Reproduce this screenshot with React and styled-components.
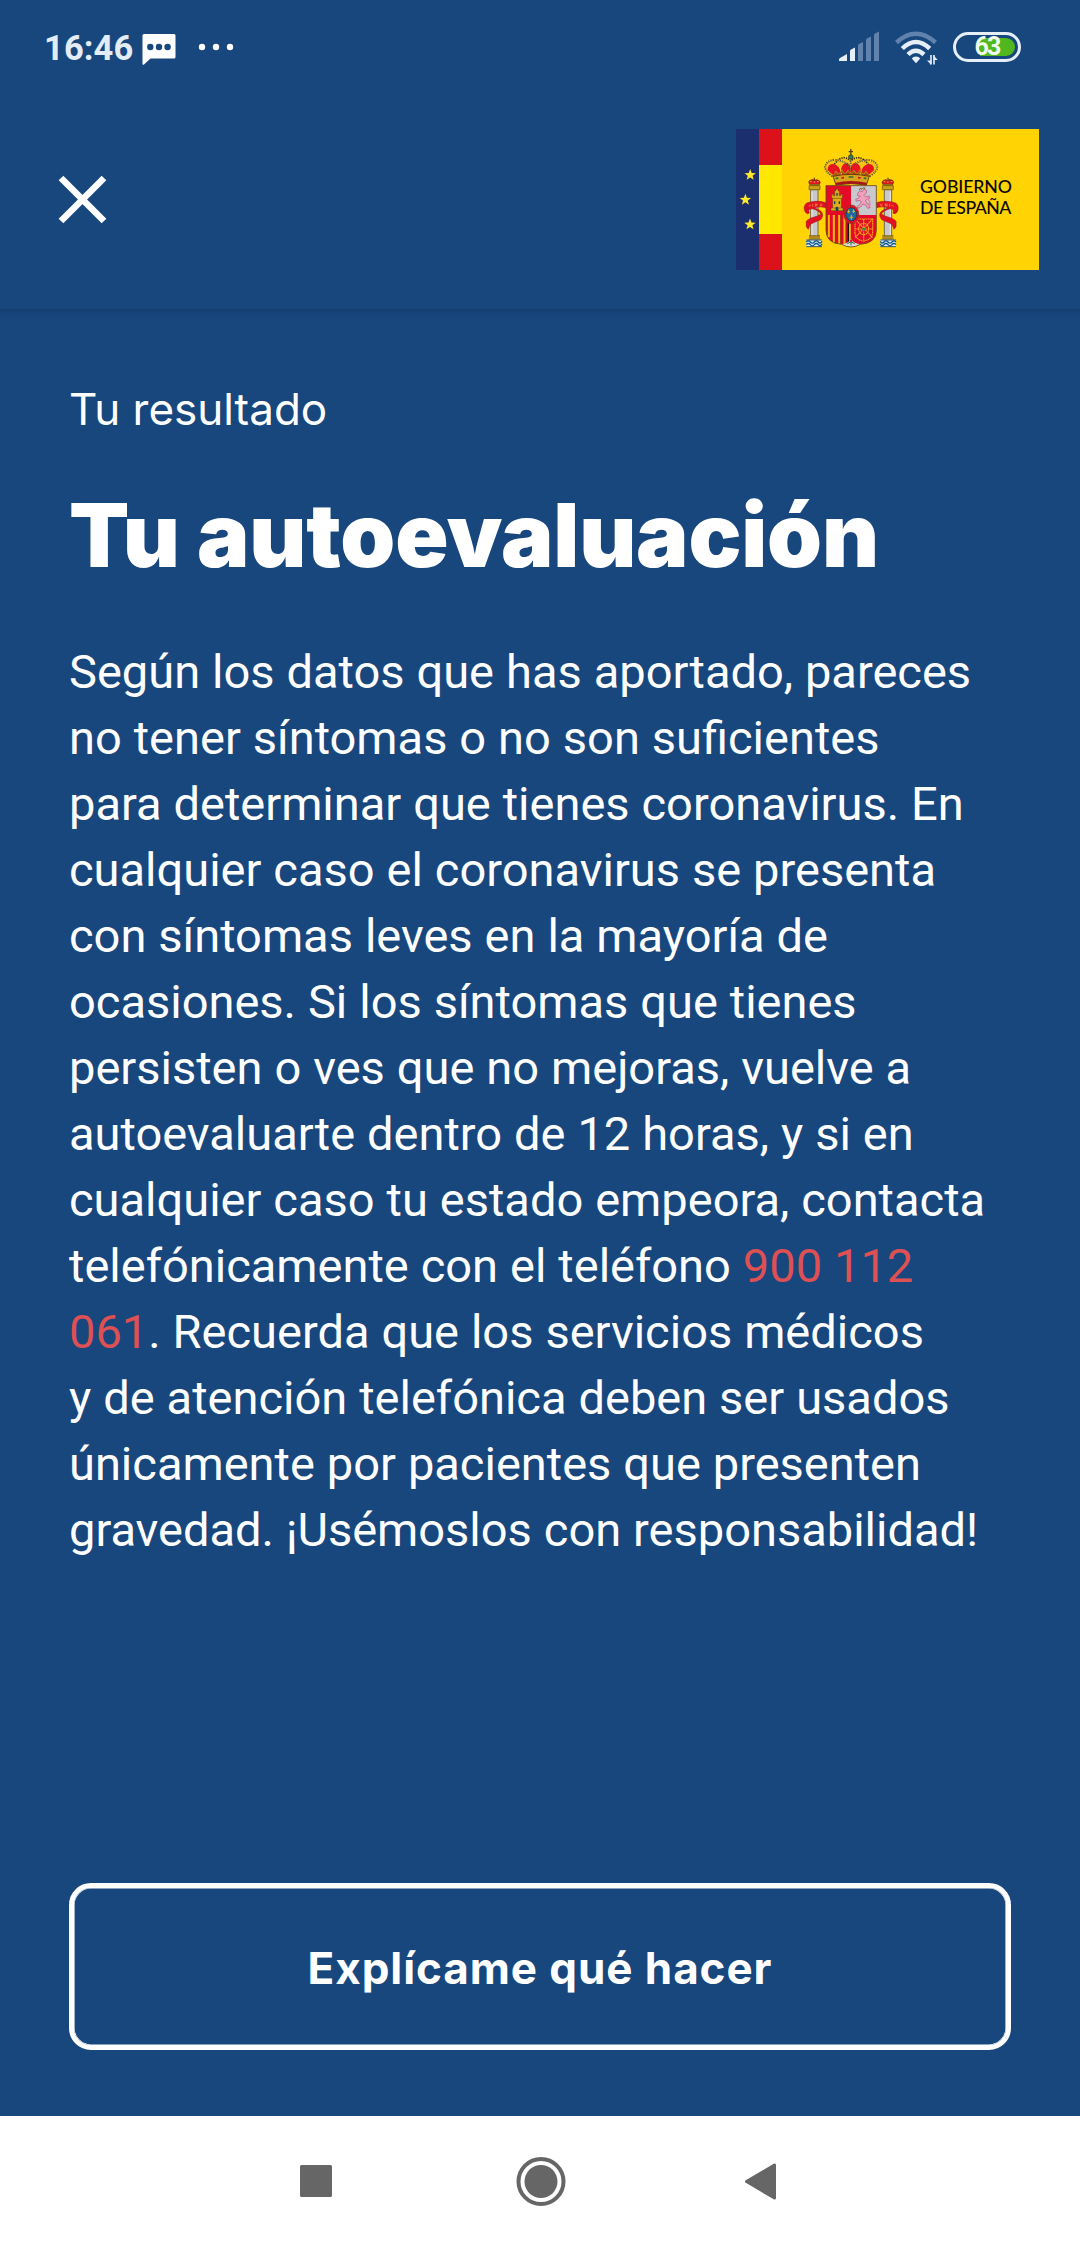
import React from "react";
import styled, { createGlobalStyle } from "styled-components";

const GlobalStyle = createGlobalStyle`
  * { box-sizing: border-box; }
  body { margin: 0; background: #18477e; }
  svg { display: block; }
`;

const INTER = `Inter, "Liberation Sans", sans-serif`;
const ROBOTO = `Roboto, "Liberation Sans", sans-serif`;

const Screen = styled.div`
  display: flex;
  flex-direction: column;
  width: 1080px;
  height: 2246px;
  background: #18477e;
  color: #fff;
  overflow: hidden;
`;

/* ---------- status bar ---------- */

const StatusBar = styled.header`
  display: flex;
  justify-content: space-between;
  flex: none;
  height: 90px;
  padding: 29px 59px 0 44px;
`;

const StatusGroup = styled.div`
  display: flex;
  align-items: flex-start;
`;

const Clock = styled.span`
  width: 98px;
  font: 700 34.5px/38px ${ROBOTO};
  letter-spacing: 0.1px;
  color: #e4ecf5;
`;

const StatusIcon = styled.svg`
  flex: none;
  margin-left: ${(p) => p.$gap || 0}px;
`;

const Battery = styled.div`
  display: flex;
  align-items: center;
  justify-content: center;
  position: relative;
  width: 68px;
  height: 30px;
  margin: 3px 0 0 15px;
  border: 3px solid #e6eef7;
  border-radius: 15px;
`;

const BatteryLevel = styled.span`
  position: absolute;
  top: 3px;
  right: 3px;
  width: 35px;
  height: 18px;
  border-radius: 0 9px 9px 0;
  background: #50b81e;
`;

const BatteryText = styled.span`
  position: relative;
  font: 700 25px/24px ${ROBOTO};
  letter-spacing: -1.8px;
  color: #f1fbef;
`;

/* ---------- app bar ---------- */

const AppBar = styled.div`
  display: flex;
  align-items: center;
  justify-content: space-between;
  flex: none;
  height: 219px;
  padding: 0 41px 0 58px;
`;

const CloseButton = styled.button`
  display: flex;
  padding: 0;
  border: 0;
  background: none;
  color: #fff;
`;

const Logo = styled.div`
  display: grid;
  grid-template-columns: 23px 23px 1fr;
  width: 303px;
  height: 141px;
`;

const Stars = styled.div`
  background: #1b2f6e;
`;

const Flag = styled.div`
  background: linear-gradient(#db121a 36px, #ffe800 36px 105px, #db121a 105px);
`;

const Emblem = styled.div`
  display: flex;
  align-items: flex-start;
  gap: 10px;
  padding: 6px 0 0 8px;
  background: #ffd304;
  color: #0b0a05;
`;

const Ministry = styled.div`
  display: flex;
  flex-direction: column;
  padding-top: 41px;
`;

const MinistryLine = styled.span`
  font: 500 17.7px/21px Lato, "Liberation Sans", sans-serif;
  letter-spacing: ${(p) => p.$track}px;
  white-space: nowrap;
`;

/* ---------- content ---------- */

const Content = styled.main`
  display: flex;
  flex-direction: column;
  flex: 1;
  padding: 73px 69px 66px;
  background: linear-gradient(#163f70, #17447a 5px, #18477e 12px);
`;

const Overline = styled.p`
  margin: 0;
  font: 400 44px/54px ${INTER};
`;

const Title = styled.h1`
  margin: 46px 0 0;
  font: 900 88px/106px ${INTER};
  letter-spacing: -0.2px;
  white-space: nowrap;
`;

const Body = styled.p`
  margin: 51px 0 0;
  font: 400 47px/66px ${ROBOTO};
  word-spacing: 0.3px;
  white-space: nowrap;
`;

const Line = styled.span`
  display: block;
`;

const Phone = styled.span`
  color: #dd5054;
`;

const OutlineButton = styled.button`
  height: 167px;
  margin-top: auto;
  padding: 3px 0 0;
  border: 5px solid #fff;
  border-radius: 22px;
  background: none;
  box-shadow: inset 0 0 0 0.6px #fff;
  color: #fff;
  font: 700 44px/54px ${INTER};
  letter-spacing: 0.93px;
`;

/* ---------- navigation bar ---------- */

const NavBar = styled.nav`
  display: flex;
  align-items: center;
  justify-content: space-between;
  flex: none;
  height: 130px;
  padding: 0 303px 0 299px;
  background: #fff;
`;

const starPoints = (cx, cy, r) =>
  Array.from({ length: 10 }, (_, i) => {
    const a = (Math.PI * i) / 5 - Math.PI / 2;
    const q = i % 2 ? r * 0.42 : r;
    return `${cx + q * Math.cos(a)},${cy + q * Math.sin(a)}`;
  }).join(" ");

const Pillar = () => (
  <g>
    <path d="M62 164h22v142H62z" fill="#c9c9cd" />
    <path d="M62 164v142M84 164v142" stroke="#57544f" strokeWidth="2.5" />
    <path d="M66 170v134" stroke="#e9e9ec" strokeWidth="3" />
    <path d="M57 152h33v12H57z" fill="#c9a21c" stroke="#6b5209" strokeWidth="2" />
    <path d="M62 164h22" stroke="#8a6d10" strokeWidth="3" />
    <path d="M57 302h33v11H57z" fill="#b38a22" />
    <path d="M57 302h33M55 313h37" stroke="#6b5209" strokeWidth="2" />
    <path d="M49 314h47v21H49z" fill="#d8ecf6" />
    <path d="M49 321q6-7 12 0t12 0t12 0t11-2M49 329q6-7 12 0t12 0t12 0t11-2" fill="none" stroke="#12578c" strokeWidth="4" />
    <path d="M49 335h47M49 315h47" stroke="#12395c" strokeWidth="2.5" />
    <path d="M60 150q-8-12 2-15q7-3 12 1q5-4 12 0q9 4 1 14z" fill="#d81a20" stroke="#5a2b0c" strokeWidth="2" />
    <path d="M60 149h27" stroke="#8b6914" strokeWidth="4" />
    <path d="M73 128v9" stroke="#5a2b0c" strokeWidth="3" />
    <path d="M60 140h5M71 141h5M81 140h5" stroke="#f2a31c" strokeWidth="3" />
    <path d="M108 203Q78 194 50 204Q38 214 45 230Q52 240 58 234L56 224Q66 219 76 224Q90 230 93 237Q84 244 66 248Q44 256 49 266Q46 276 55 283L61 268Q76 260 92 254Q104 240 92 228Q82 222 74 218Q90 213 108 218Z" fill="#e30f23" stroke="#8f1015" strokeWidth="1.5" />
    <path d="M56 214l7-4M68 206v9M76 205v9l5-8v8M90 206l3 8l4-8" fill="none" stroke="#f0a13a" strokeWidth="2" />
  </g>
);

const CoatOfArms = () => (
  <svg width="120" height="125" viewBox="0 0 360 375">
    <Pillar />
    <g transform="translate(367 0) scale(-1 1)">
      <Pillar />
    </g>

    {/* shield quarters */}
    <path d="M108 152h75v88h-75z" fill="#e50b28" />
    <path d="M183 152h76v88h-76z" fill="#c9c8ce" />
    <path d="M108 240h75v80q-9 8-26 7q-49-2-49-42z" fill="#e50b28" />
    <path d="M116 240v67M132 240v82M148 240v87M164 240v87M179 240v84" stroke="#f6b70d" strokeWidth="7" />
    <path d="M112 240v60M136 240v85M152 240v88M168 240v88" stroke="#7c1a12" strokeWidth="2" />
    <path d="M175 262v62" stroke="#17100a" strokeWidth="4" />
    <path d="M183 240h76v45q0 40-48 42q-19 1-28-8z" fill="#e50b28" />
    <path d="M155 328q19-2 28-16q9 14 28 16q-16 8-28 8q-12 0-28-8z" fill="#dcdad4" />
    <path d="M183 314v17M172 326l11-6l11 6" stroke="#16723a" strokeWidth="3" fill="none" />
    <circle cx="183" cy="318" r="4" fill="#d8232a" />
    <path d="M108 152h151v133q0 40-48 43q-14 8-28 8q-14 0-28-8q-47-3-47-43z" fill="none" stroke="#69421c" strokeWidth="2.5" />

    {/* castle */}
    <path d="M123 227v-8h5v-29h-3v-12h5v4h4v-15h4v-5h6v5h4v15h4v-4h5v12h-3v29h5v8z" fill="#dcae18" stroke="#5f4206" strokeWidth="1.5" />
    <path d="M128 190h26M130 219h22" stroke="#7d590a" strokeWidth="2" />
    <path d="M137 227v-9q4-6 8 0v9zM132 199h4v8h-4zM146 199h4v8h-4zM139 174h4v8h-4z" fill="#163b63" />

    {/* lion */}
    <path
      d="M203 176l6-9l8 3l5-8l8 5l-2 8l-6 6l5 5l9-3l4 6l-8 3l-5 4l2 8l8 4l3 10l-7 2l-5-9l-9-4l-7 9l-8 4l-3-5l8-6l5-9l-7-4l-8 3l-2-6l9-4l5-5l-8-2z"
      fill="#f4a0bd"
      stroke="#a3416b"
      strokeWidth="1.8"
    />
    <path d="M232 218q12-6 6-18t2-18" fill="none" stroke="#e583a8" strokeWidth="4" />
    <path d="M207 164l5-4l4 3l5-5l5 3" fill="none" stroke="#6b4a19" strokeWidth="3" />

    {/* chains */}
    <g fill="none" stroke="#f0a51a" strokeWidth="3.5" strokeDasharray="5 1.5">
      <path d="M195 252h53v40q-2 22-27 26q-24-3-26-24zM195 282h53M221 252v66M195 252l53 56M248 252l-53 56" />
      <ellipse cx="221" cy="282" rx="15" ry="17" />
    </g>
    <circle cx="221" cy="282" r="4.5" fill="#289348" />

    {/* central escutcheon */}
    <ellipse cx="184" cy="238" rx="22.5" ry="28" fill="#e30e25" stroke="#7b3912" strokeWidth="2" />
    <ellipse cx="184" cy="238" rx="16" ry="20" fill="#1b6a9d" stroke="#102d48" strokeWidth="2" />
    <path d="M176 224v11M172 230h8M191 223v11M187 229h8M184 240v14M179 247h10" stroke="#d7b72a" strokeWidth="3" />

    {/* crown */}
    <path d="M127 122L108 108Q103 92 116 82Q132 68 155 72Q174 66 182 78Q192 66 211 72Q234 68 250 82Q263 92 257 108L238 122L228 150H137Z" fill="#f4c516" />
    <path d="M113 106Q112 88 128 87Q144 88 150 105L152 122L132 122ZM153 102Q158 82 172 84Q182 88 182 105Q182 88 193 84Q208 82 212 102L208 120H157ZM215 105Q221 88 237 87Q253 88 252 106L233 122L214 122Z" fill="#e8141f" />
    <path d="M128 124Q106 110 105 96Q108 78 132 74Q160 76 178 92M238 124Q261 110 262 96Q259 78 235 74Q207 76 187 92M133 88Q158 54 182 78Q208 54 235 88M182 76V118" fill="none" stroke="#3a2a0c" strokeWidth="5" strokeDasharray="4 3" />
    <path d="M128 124Q106 110 105 96Q108 78 132 74Q160 76 178 92M238 124Q261 110 262 96Q259 78 235 74Q207 76 187 92M182 76V118" fill="none" stroke="#f7eec0" strokeWidth="2" strokeDasharray="3 4" />
    <path d="M130 124l8-13l8 10l10-14l9 13l9-12l9 10l9-10l9 12l9-13l10 14l8-10l9 13" fill="none" stroke="#c28a15" strokeWidth="5" />
    <path d="M130 124l8-11l8 8l10-12l9 11l9-10l9 8l9-8l9 10l9-11l10 12l8-8l9 11" fill="none" stroke="#4f3208" strokeWidth="1.5" />
    <path d="M129 124Q183 112 238 124L229 150Q183 141 138 150Z" fill="#d9a31a" stroke="#4d3007" strokeWidth="2.5" />
    <path d="M137 143Q183 133 230 143L229 150Q183 142 138 150Z" fill="#a81518" />
    <path d="M137 131l8-2M221 129l8 2M176 126h14" stroke="#26713c" strokeWidth="5" />
    <path d="M154 129l8-1M204 128l8 1" stroke="#c3171d" strokeWidth="5" />
    <circle cx="182.500" cy="66" r="7" fill="#2e7a68" stroke="#3a2a0c" strokeWidth="2" />
    <path d="M182.500 42v19M176 50h13" stroke="#4d431a" strokeWidth="4" />
  </svg>
);

const MESSAGE = [
  "Según los datos que has aportado, pareces",
  "no tener síntomas o no son suficientes",
  "para determinar que tienes coronavirus. En",
  "cualquier caso el coronavirus se presenta",
  "con síntomas leves en la mayoría de",
  "ocasiones. Si los síntomas que tienes",
  "persisten o ves que no mejoras, vuelve a",
  "autoevaluarte dentro de 12 horas, y si en",
  "cualquier caso tu estado empeora, contacta",
  <>telefónicamente con el teléfono <Phone>900 112</Phone></>,
  <><Phone>061</Phone>. Recuerda que los servicios médicos</>,
  "y de atención telefónica deben ser usados",
  "únicamente por pacientes que presenten",
  "gravedad. ¡Usémoslos con responsabilidad!",
];

export default function App() {
  return (
    <>
      <GlobalStyle />
      <Screen>
        <StatusBar>
          <StatusGroup>
            <Clock>16:46</Clock>
            <StatusIcon width="34" height="40" viewBox="0 0 34 40">
              <path d="M2 5h30q1.500 0 1.500 1.500v21.500q0 1.500-1.500 1.500H8.500L2 35.500q-1.500 1-1.500-1V6.500Q.5 5 2 5z" fill="#fff" />
              <g fill="#18477e">
                <circle cx="8.300" cy="18" r="3.200" />
                <circle cx="17" cy="18" r="3.200" />
                <circle cx="25.600" cy="18" r="3.200" />
              </g>
            </StatusIcon>
            <StatusIcon $gap={22} width="38" height="40" viewBox="0 0 38 40" fill="#fff">
              <circle cx="4" cy="18" r="3.200" />
              <circle cx="18" cy="18" r="3.200" />
              <circle cx="32" cy="18" r="3.200" />
            </StatusIcon>
          </StatusGroup>
          <StatusGroup>
            <StatusIcon width="41" height="36" viewBox="0 0 41 36">
              <g fill="#e6eef7">
                <path d="M0 32v-1.500q0-1 1-1.500l7-4v7z" />
                <path d="M11 32V22q0-1 1-1.500l4-2V32z" />
              </g>
              <g fill="#6182ac">
                <path d="M19 32V16.500q0-1 1-1.500l4-2v19z" />
                <path d="M27 32V11q0-1 1-1.500l4-2V32z" />
                <path d="M35 32V6q0-1 1-1.500l4-2V32z" />
              </g>
            </StatusIcon>
            <StatusIcon $gap={15} width="43" height="38" viewBox="0 0 43 38" fill="none" strokeWidth="4.500">
              <path d="M1.500 13.500Q20.800-4 40.500 13.500" stroke="#6182ac" />
              <path d="M7.300 19.500Q20.800 6.500 34.700 19.500" stroke="#e6eef7" />
              <path d="M13 25.500Q20.800 18 29 25.500" stroke="#e6eef7" />
              <path d="M21 27.500q3 0 4.200 2L21 34.300L16.800 29.500q1.200-2 4.200-2z" fill="#e6eef7" />
              <path d="M36 26v9.500M39 26v9.500" stroke="#e6eef7" strokeWidth="1.600" />
              <path d="M36.500 31.500h-4.500l4 4.300zM38.500 31h4.200l-4-4.500z" fill="#e6eef7" />
            </StatusIcon>
            <Battery>
              <BatteryLevel />
              <BatteryText>63</BatteryText>
            </Battery>
          </StatusGroup>
        </StatusBar>

        <AppBar>
          <CloseButton aria-label="Cerrar">
            <svg width="49" height="49" viewBox="0 0 49 49">
              <path d="M3 3l43 43M46 3L3 46" stroke="#fff" strokeWidth="6.600" />
            </svg>
          </CloseButton>
          <Logo>
            <Stars>
              <svg width="23" height="141" fill="#ffe92b">
                <polygon points={starPoints(14.2, 46, 6)} />
                <polygon points={starPoints(9.4, 70.8, 6)} />
                <polygon points={starPoints(14, 95.5, 6)} />
              </svg>
            </Stars>
            <Flag />
            <Emblem>
              <CoatOfArms />
              <Ministry>
                <MinistryLine $track={-0.1}>GOBIERNO</MinistryLine>
                <MinistryLine $track={-0.5}>DE ESPAÑA</MinistryLine>
              </Ministry>
            </Emblem>
          </Logo>
        </AppBar>

        <Content>
          <Overline>Tu resultado</Overline>
          <Title>Tu autoevaluación</Title>
          <Body>
            {MESSAGE.map((line, i) => (
              <Line key={i}>{line}</Line>
            ))}
          </Body>
          <OutlineButton>Explícame qué hacer</OutlineButton>
        </Content>

        <NavBar>
          <svg width="37" height="50">
            <rect x="1" y="9" width="32" height="32" rx="1.500" fill="#666" />
          </svg>
          <svg width="50" height="50" fill="#666">
            <circle cx="25" cy="25.500" r="22.500" fill="none" stroke="#666" strokeWidth="4" />
            <circle cx="25" cy="25.500" r="16.500" />
          </svg>
          <svg width="32" height="50">
            <path d="M1.500 25.500L29.500 9V42z" fill="#666" stroke="#666" strokeWidth="3" strokeLinejoin="round" />
          </svg>
        </NavBar>
      </Screen>
    </>
  );
}
